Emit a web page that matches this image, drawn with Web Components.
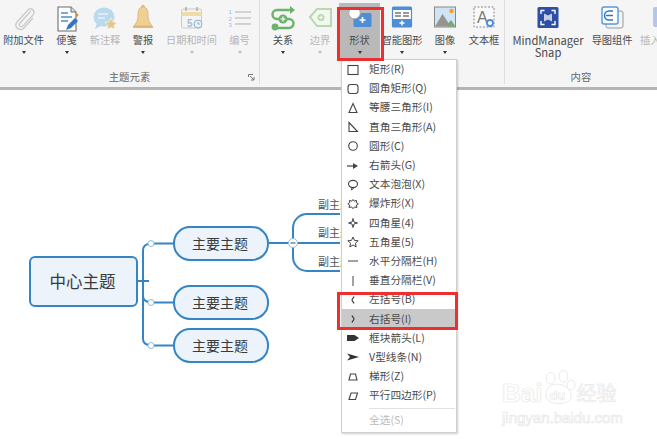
<!DOCTYPE html>
<html>
<head>
<meta charset="utf-8">
<style>
html,body{margin:0;height:100%;background:#fff;overflow:hidden;}
body{font-family:"Noto Sans CJK SC","Liberation Sans",sans-serif;width:657px;height:439px;position:relative;}
</style>
</head>
<body>
<app-ribbon>
  <rb-group label="主题元素" style="width:260px" launcher>
    <rb-button label="附加文件" w="47" arrow>
      <svg viewBox="0 0 30 30" width="30" height="30"><path d="M22 8 11 20c-2 2.400 1 5 3 3L24 12c3-4-2-8-5-5L8 19c-4 5 3 10 7 6l9-10" fill="none" stroke="#cbcbcb" stroke-width="1.400"/></svg>
    </rb-button>
    <rb-button label="便笺" w="39" arrow>
      <svg viewBox="0 0 30 30" width="30" height="30"><path d="M6 4h13l5 5v19H6z" fill="#fff" stroke="#6d6d6d" stroke-width="1.100"/><path d="M19 4v5h5" fill="#ddd" stroke="#6d6d6d"/><path d="M9 10h7M9 14h11M9 18h7" stroke="#4b8fd0" stroke-width="1.400"/><path d="M14 27l2-5 7-7 3 3-7 7z" fill="#2f77c4"/><circle cx="25" cy="12" r="1.500" fill="#e0913a"/></svg>
    </rb-button>
    <rb-button label="新注释" w="38" muted>
      <svg viewBox="0 0 30 30" width="30" height="30"><ellipse cx="14" cy="14" rx="10.500" ry="9.500" fill="#b9d9ec"/><path d="M7 20l-2 6 8-4z" fill="#b9d9ec"/><path d="M8 11h10M8 15h7" stroke="#fff" stroke-width="1.200"/><path d="M21 15l2 3.800 4.200.6-3 2.900.7 4.200-3.900-2-3.800 2 .7-4.200-3-2.900 4.200-.6z" fill="#e2c88a" stroke="#fff" stroke-width=".6"/></svg>
    </rb-button>
    <rb-button label="警报" w="38" arrow>
      <svg viewBox="0 0 30 30" width="30" height="30"><circle cx="15" cy="3.500" r="1.800" fill="#e3bf82"/><path d="M15 4c-4.500 0-5 4-5 9 0 5-2 7-4 10h18c-2-3-4-5-4-10 0-5-.5-9-5-9z" fill="#f0cf95" stroke="#d7ae6c" stroke-width=".8"/><path d="M5 23h20v2H5z" fill="#dfb877"/></svg>
    </rb-button>
    <rb-button label="日期和时间" w="59" arrow muted>
      <svg viewBox="0 0 30 30" width="30" height="30"><rect x="4.500" y="6" width="20" height="19" rx="2" fill="#f4f4f4" stroke="#c9c9c9"/><path d="M4.500 9h20v4h-20z" fill="#f0dca8"/><path d="M9 4v4M20 4v4" stroke="#aaa" stroke-width="1.400"/><text x="10" y="24" font-size="10" font-family="Liberation Sans" font-weight="700" fill="#a9bccd">5</text><circle cx="21" cy="21" r="4" fill="#e8f1f7" stroke="#8bb4d2"/><path d="M21 18.800V21h2" stroke="#8bb4d2" fill="none"/></svg>
    </rb-button>
    <rb-button label="编号" w="37" arrow muted>
      <svg viewBox="0 0 30 30" width="30" height="30"><path d="M10 9h16M10 15h16M10 21h16" stroke="#c6c6c6" stroke-width="1.600"/><text x="3.500" y="11" font-size="6" font-family="Liberation Sans" fill="#8fc0e6">1</text><text x="3.500" y="17.500" font-size="6" font-family="Liberation Sans" fill="#8fc0e6">2</text><text x="3.500" y="24" font-size="6" font-family="Liberation Sans" fill="#8fc0e6">3</text></svg>
    </rb-button>
  </rb-group>
  <rb-group label="" style="width:245px;padding-left:4px;box-sizing:border-box">
    <rb-button label="关系" w="38" arrow>
      <svg viewBox="0 0 30 30" width="30" height="30"><path d="M23 7H9a4.500 4.500 0 0 0 0 9h12a4.500 4.500 0 0 1 0 9H8" fill="none" stroke="#6cb26c" stroke-width="2.400"/><path d="M22 3l5 4-5 4z" fill="#6cb26c"/><circle cx="7" cy="24" r="3.400" fill="#6cb26c"/><circle cx="15" cy="16" r="4.500" fill="#6cb26c"/><path d="M12.500 16h5M15 13.500v5" stroke="#fff" stroke-width="1.200"/></svg>
    </rb-button>
    <rb-button label="边界" w="36" arrow muted>
      <svg viewBox="0 0 30 30" width="30" height="30"><path d="M5 14 12 6h14v17H12z" fill="#f2f7f0" stroke="#b9d8b2" stroke-width="2"/><circle cx="16" cy="14.500" r="3.500" fill="#b9d8b2"/><path d="M14 14.500h4M16 12.500v4" stroke="#fff"/></svg>
    </rb-button>
    <rb-button label="形状" w="41" arrow active style="margin-left:1px">
      <svg viewBox="0 0 30 30" width="30" height="30"><rect x="8.500" y="10" width="18" height="14" rx="1.500" fill="#4d8ed6"/><path d="M14.500 17h6M17.500 14v6" stroke="#fff" stroke-width="1.600"/><circle cx="9.500" cy="10" r="5.800" fill="#fff" stroke="#aaa"/></svg>
    </rb-button>
    <rb-button label="智能图形" w="44" arrow>
      <svg viewBox="0 0 30 30" width="30" height="30"><rect x="5.500" y="4" width="19" height="20" rx="1" fill="#fff" stroke="#4d8ed6" stroke-width="1.200"/><path d="M5.500 4h19v3h-19z" fill="#4d8ed6"/><path d="M8 10h6M16 10h6M8 13h6M16 13h6" stroke="#777" stroke-width="1.300"/><path d="M5.500 16h19v8h-19z" fill="#4d8ed6"/><path d="M12.500 20h5M15 17.500v5" stroke="#fff" stroke-width="1.400"/></svg>
    </rb-button>
    <rb-button label="图像" w="42" arrow>
      <svg viewBox="0 0 30 30" width="30" height="30"><rect x="4.500" y="4" width="21" height="20" fill="#cfe4f5" stroke="#888"/><circle cx="21.500" cy="8" r="2.200" fill="#e8a13a"/><path d="M5 23.500 12.500 11l6 9 2.500-3 4 6.500z" fill="#97938f"/><path d="M18 23.500l3.500-5.500 4 5.500z" fill="#6cb26c"/></svg>
    </rb-button>
    <rb-button label="文本框" w="36">
      <svg viewBox="0 0 30 30" width="30" height="30"><rect x="5" y="4" width="20" height="20" fill="#fafafa" stroke="#888" stroke-dasharray="2 1.500"/><text x="8" y="20" font-size="16" font-family="Liberation Sans" fill="#777">A</text><circle cx="21" cy="20" r="3" fill="#fff" stroke="#4d8ed6" stroke-width="1.800"/></svg>
    </rb-button>
  </rb-group>
  <rb-group label="内容" style="width:152px" last>
    <rb-button label="MindManager Snap" w="86" latin>
      <svg viewBox="0 0 30 30" width="30" height="30"><rect x="4.500" y="4" width="21" height="21" rx="1.500" fill="#2d4fa8"/><path d="M8 11V7.500h3.500M18.500 7.500H22V11M22 18v3.500h-3.500M11.500 21.500H8V18" fill="none" stroke="#fff" stroke-width="1.400"/><path d="M11 10.500l4 2 4-2v8l-4-2-4 2z" fill="#c7cfe0"/></svg>
    </rb-button>
    <rb-button label="导图组件" w="42">
      <svg viewBox="0 0 30 30" width="30" height="30"><rect x="9" y="8" width="17" height="17" rx="2" fill="#f4f4f4" stroke="#999"/><rect x="5" y="4" width="16" height="17" rx="2" fill="#fff" stroke="#4d9be0" stroke-width="1.400"/><path d="M16 8h-4a4 4 0 0 0 0 9h4M9 12.500h7" fill="none" stroke="#2f77c4" stroke-width="1.500"/></svg>
    </rb-button>
    <rb-button label="插入" w="24" muted clip>
      <svg viewBox="0 0 30 30" width="30" height="30"><rect x="13" y="4" width="17" height="20" rx="2" fill="#b6c6e8"/></svg>
    </rb-button>
  </rb-group>
</app-ribbon>

<mind-canvas>
  <svg slot="lines" width="657" height="349" viewBox="0 90 657 349" style="display:block">
    <g fill="none" stroke="#3585c4" stroke-width="2">
      <path d="M138 281h11"/>
      <path d="M143 281v-31a6 6 0 0 1 6-6"/>
      <path d="M143 281v15a6 6 0 0 0 6 6"/>
      <path d="M143 281v58a6 6 0 0 0 6 6"/>
      <path d="M149 243.500h24M149 302.500h24M149 345.500h24"/>
      <path d="M269 243h24"/>
      <path d="M340 214h-33a14 14 0 0 0-14 14v29a14 14 0 0 0 14 14h33"/>
      <path d="M293 243h47"/>
    </g>
    <g fill="#fff" stroke="#8fbbdc">
      <circle cx="151" cy="243.500" r="3"/><circle cx="151" cy="302.500" r="3"/><circle cx="151" cy="345.500" r="3"/>
      <circle cx="293" cy="243" r="4.500"/>
    </g>
    <path d="M290.500 243h5" stroke="#444"/>
  </svg>
  <mind-topic style="left:29px;top:166px;width:109px;height:51px;--r:6px;--fs:16.500px">中心主题</mind-topic>
  <mind-topic style="left:173px;top:136px;width:96px;height:35px;--r:17px;--fs:14px">主要主题</mind-topic>
  <mind-topic style="left:173px;top:195px;width:96px;height:35px;--r:17px;--fs:14px">主要主题</mind-topic>
  <mind-topic style="left:173px;top:238px;width:96px;height:35px;--r:17px;--fs:14px">主要主题</mind-topic>
  <sub-topic style="left:318px;top:106px">副主题</sub-topic>
  <sub-topic style="left:318px;top:134px">副主题</sub-topic>
  <sub-topic style="left:318px;top:163px">副主题</sub-topic>
  <baidu-mark style="left:502px;top:281px"></baidu-mark>
</mind-canvas>

<shape-menu>
  <menu-row label="矩形(R)"><svg viewBox="0 0 12 12"><rect x="1" y="1.500" width="10" height="9" fill="none" stroke="#444" stroke-width="1.100"/></svg></menu-row>
  <menu-row label="圆角矩形(Q)"><svg viewBox="0 0 12 12"><rect x="1" y="1.500" width="10" height="9" rx="2.500" fill="none" stroke="#444" stroke-width="1.100"/></svg></menu-row>
  <menu-row label="等腰三角形(I)"><svg viewBox="0 0 12 12"><path d="M6 1.500 10 10.500H2z" fill="none" stroke="#444" stroke-width="1.100"/></svg></menu-row>
  <menu-row label="直角三角形(A)"><svg viewBox="0 0 12 12"><path d="M2 1.500v9h8.500z" fill="none" stroke="#444" stroke-width="1.100"/></svg></menu-row>
  <menu-row label="圆形(C)"><svg viewBox="0 0 12 12"><circle cx="6" cy="6" r="4.300" fill="none" stroke="#444" stroke-width="1.100"/></svg></menu-row>
  <menu-row label="右箭头(G)"><svg viewBox="0 0 12 12"><path d="M0 6h7" stroke="#444" stroke-width="1.200"/><path d="M6 3 11 6 6 9z" fill="#444"/></svg></menu-row>
  <menu-row label="文本泡泡(X)"><svg viewBox="0 0 12 12"><ellipse cx="6" cy="5" rx="4.500" ry="3.600" fill="none" stroke="#444" stroke-width="1.100"/><path d="M5 8.500 4.500 11 7 8.700" fill="none" stroke="#444"/></svg></menu-row>
  <menu-row label="爆炸形(X)"><svg viewBox="0 0 12 12"><path d="M6 1.500 7.300 3.200 9.500 2.300 9.300 4.500 11.300 5.800 9.400 7 10 9.500 7.600 8.900 6 10.700 4.600 8.900 2 9.500 2.700 7 .8 5.800 2.800 4.500 2.500 2.300 4.700 3.200z" fill="none" stroke="#444" stroke-width="1"/></svg></menu-row>
  <menu-row label="四角星(4)"><svg viewBox="0 0 12 12"><path d="M6 1.500 7 5 10.500 6 7 7 6 10.500 5 7 1.500 6 5 5z" fill="none" stroke="#444" stroke-width="1"/></svg></menu-row>
  <menu-row label="五角星(5)"><svg viewBox="0 0 12 12"><path d="M6 1 7.500 4.400 11.200 4.800 8.400 7.200 9.200 10.900 6 9 2.800 10.900 3.600 7.200 .8 4.800 4.500 4.400z" fill="none" stroke="#444" stroke-width="1"/></svg></menu-row>
  <menu-row label="水平分隔栏(H)"><svg viewBox="0 0 12 12"><path d="M1 6h10" stroke="#555" stroke-width="1.100"/></svg></menu-row>
  <menu-row label="垂直分隔栏(V)"><svg viewBox="0 0 12 12"><path d="M6 1v10" stroke="#555" stroke-width="1.100"/></svg></menu-row>
  <menu-row label="左括号(B)"><svg viewBox="0 0 12 12"><path d="M7 2.500C6.500 4 5 5 5 6s1.500 2 2 3.500" fill="none" stroke="#333" stroke-width="1.100"/></svg></menu-row>
  <menu-row label="右括号(I)" selected><svg viewBox="0 0 12 12"><path d="M5 2.500C5.500 4 7 5 7 6S5.500 8 5 9.500" fill="none" stroke="#333" stroke-width="1.100"/></svg></menu-row>
  <menu-row label="框块箭头(L)"><svg viewBox="0 0 12 12"><path d="M0 3h7.500L12 6 7.500 9H0z" fill="#333"/></svg></menu-row>
  <menu-row label="V型线条(N)"><svg viewBox="0 0 12 12"><path d="M0 2.500 12 6 0 9.500 3 6z" fill="#333"/></svg></menu-row>
  <menu-row label="梯形(Z)"><svg viewBox="0 0 12 12"><path d="M3.500 3h5l1.500 6H2z" fill="none" stroke="#444" stroke-width="1.100"/></svg></menu-row>
  <menu-row label="平行四边形(P)"><svg viewBox="0 0 12 12"><path d="M4 3h6.500L8.500 9.500H2z" fill="none" stroke="#444" stroke-width="1.100"/></svg></menu-row>
  <menu-sep></menu-sep>
  <menu-row label="全选(S)" disabled></menu-row>
</shape-menu>

<red-box style="left:337px;top:7px;width:47px;height:54px"></red-box>
<red-box style="left:337px;top:292px;width:121px;height:38px"></red-box>

<script>
const FONT = '"Noto Sans CJK SC","Liberation Sans",sans-serif';

class AppRibbon extends HTMLElement {
  constructor(){
    super();
    this.attachShadow({mode:"open"}).innerHTML = `
    <style>
    :host{display:flex;height:87px;background:#f5f5f5;border-bottom:3px solid #b4b4b4;overflow:hidden;font-family:${FONT};}
    </style><slot></slot>`;
  }
}
customElements.define("app-ribbon", AppRibbon);

class RbGroup extends HTMLElement {
  constructor(){ super(); this.attachShadow({mode:"open"}); }
  connectedCallback(){
    const launcher = this.hasAttribute("launcher") ? `<svg class="lau" width="7" height="7" viewBox="0 0 7 7"><path d="M.5 3V.5H5M2 2l4 4M6 3v3H3" fill="none" stroke="#777"/></svg>` : "";
    this.shadowRoot.innerHTML = `
    <style>
    :host{display:flex;flex-direction:column;flex:none;height:84px;position:relative;box-sizing:border-box;}
    :host(:not([last])){border-right:1px solid #dedede;}
    .row{display:flex;height:68px;align-items:flex-start;}
    .name{flex:1;text-align:center;font-size:10.400px;line-height:14px;color:#666;padding-top:2px;}
    .lau{position:absolute;right:4px;bottom:3px;}
    </style>
    <div class="row"><slot></slot></div>
    <div class="name">${this.getAttribute("label")}</div>${launcher}`;
  }
}
customElements.define("rb-group", RbGroup);

class RbButton extends HTMLElement {
  constructor(){ super(); this.attachShadow({mode:"open"}); }
  connectedCallback(){
    const arrow = this.hasAttribute("arrow") ? `<i class="arr"></i>` : "";
    this.shadowRoot.innerHTML = `
    <style>
    :host{display:flex;flex-direction:column;align-items:center;flex:none;width:${this.getAttribute("w")}px;height:60px;box-sizing:border-box;padding-top:3px;color:#4a4a4a;}
    :host([muted]){color:#b5b5b5;}
    :host([active]){background:linear-gradient(transparent 3px,#b9b9b9 3px);}
    :host([clip]){align-items:flex-start;padding-left:7px;}
    .ic{height:29px;line-height:0;}
    .lb{font-size:10.200px;line-height:12px;margin-top:2px;text-align:center;word-break:keep-all;}
    :host([latin]) .lb{font-size:11.200px;}
    .arr{width:0;height:0;border:2.500px solid transparent;border-top:3px solid #333;border-bottom:0;margin-top:5px;}
    :host([muted]) .arr{border-top-color:#bbb;}
    </style>
    <div class="ic"><slot></slot></div>
    <div class="lb">${this.getAttribute("label")}</div>${arrow}`;
  }
}
customElements.define("rb-button", RbButton);

class MindCanvas extends HTMLElement {
  constructor(){
    super();
    this.attachShadow({mode:"open"}).innerHTML = `
    <style>:host{display:block;position:relative;height:349px;background:#fff;overflow:hidden;}</style>
    <slot name="lines"></slot><slot></slot>`;
  }
}
customElements.define("mind-canvas", MindCanvas);

class MindTopic extends HTMLElement {
  constructor(){
    super();
    this.attachShadow({mode:"open"}).innerHTML = `
    <style>:host{position:absolute;box-sizing:border-box;display:flex;align-items:center;justify-content:center;padding:0 2px 2px 0;
      background:#ecf3fa;border:2px solid #3585c4;border-radius:var(--r);font-size:var(--fs);color:#3a3a3a;font-family:${FONT};}</style><slot></slot>`;
  }
}
customElements.define("mind-topic", MindTopic);

class SubTopic extends HTMLElement {
  constructor(){
    super();
    this.attachShadow({mode:"open"}).innerHTML = `
    <style>:host{position:absolute;display:block;font-size:11px;line-height:16px;color:#555;font-family:${FONT};}</style><slot></slot>`;
  }
}
customElements.define("sub-topic", SubTopic);

class BaiduMark extends HTMLElement {
  constructor(){
    super();
    this.attachShadow({mode:"open"}).innerHTML = `
    <style>
    :host{position:absolute;display:block;width:125px;color:#fff;-webkit-text-stroke:.7px #e8e8e8;font-family:"Liberation Sans",sans-serif;}
    .top{display:flex;align-items:flex-end;height:36px;font-size:26px;font-weight:700;line-height:28px;white-space:nowrap;}
    .paw{flex:none;margin-left:-1px;}
    .jy{font-size:20px;font-family:${FONT};font-weight:400;line-height:28px;}
    .url{font-size:15px;line-height:15px;margin-top:3px;white-space:nowrap;}
    </style>
    <div class="top"><span>Bai</span>
      <svg class="paw" width="35" height="38" viewBox="0 0 36 38" fill="#fff" stroke="#e8e8e8" stroke-width="1">
        <ellipse cx="10" cy="9" rx="4.500" ry="6"/><ellipse cx="23" cy="7" rx="4.500" ry="6"/><ellipse cx="31" cy="16" rx="4" ry="5"/>
        <path d="M5 26c0-7 5-11 12-11s14 5 14 12c0 6-6 8-13 8S5 32 5 26z"/>
        <text x="9" y="31" font-size="13" font-family="Liberation Sans" stroke-width=".6">du</text>
      </svg>
      <span class="jy">经验</span></div>
    <div class="url">jingyan.baidu.com</div>`;
  }
}
customElements.define("baidu-mark", BaiduMark);

class ShapeMenu extends HTMLElement {
  constructor(){
    super();
    this.attachShadow({mode:"open"}).innerHTML = `
    <style>:host{position:absolute;left:341px;top:59px;width:116px;height:374px;box-sizing:border-box;
      background:#fff;border:1px solid #cfcfcf;box-shadow:1px 1px 2px rgba(0,0,0,.2);font-family:${FONT};
      display:flex;flex-direction:column;}</style><slot></slot>`;
  }
}
customElements.define("shape-menu", ShapeMenu);

class MenuRow extends HTMLElement {
  constructor(){ super(); this.attachShadow({mode:"open"}); }
  connectedCallback(){
    this.shadowRoot.innerHTML = `
    <style>
    :host{display:flex;align-items:center;flex:none;height:19.200px;font-size:10.700px;color:#4a4a4a;}
    :host([selected]){background:#c9c9c9;}
    :host([disabled]){color:#bbb;}
    .ic{width:22px;margin-right:5px;display:flex;justify-content:center;flex:none;}
    span{position:relative;top:-1px;}
    ::slotted(svg){width:12px;height:12px;display:block;overflow:visible;}
    </style>
    <div class="ic"><slot></slot></div><span>${this.getAttribute("label")}</span>`;
  }
}
customElements.define("menu-row", MenuRow);

class MenuSep extends HTMLElement {
  constructor(){
    super();
    this.attachShadow({mode:"open"}).innerHTML = `
    <style>:host{display:block;flex:none;height:1px;margin:3px 1px 2px 27px;background:#e2e2e2;}</style>`;
  }
}
customElements.define("menu-sep", MenuSep);

class RedBox extends HTMLElement {
  constructor(){
    super();
    this.attachShadow({mode:"open"}).innerHTML = `
    <style>:host{position:absolute;box-sizing:border-box;border:3px solid #ee2f2f;display:block;}</style>`;
  }
}
customElements.define("red-box", RedBox);
</script>
</body>
</html>
